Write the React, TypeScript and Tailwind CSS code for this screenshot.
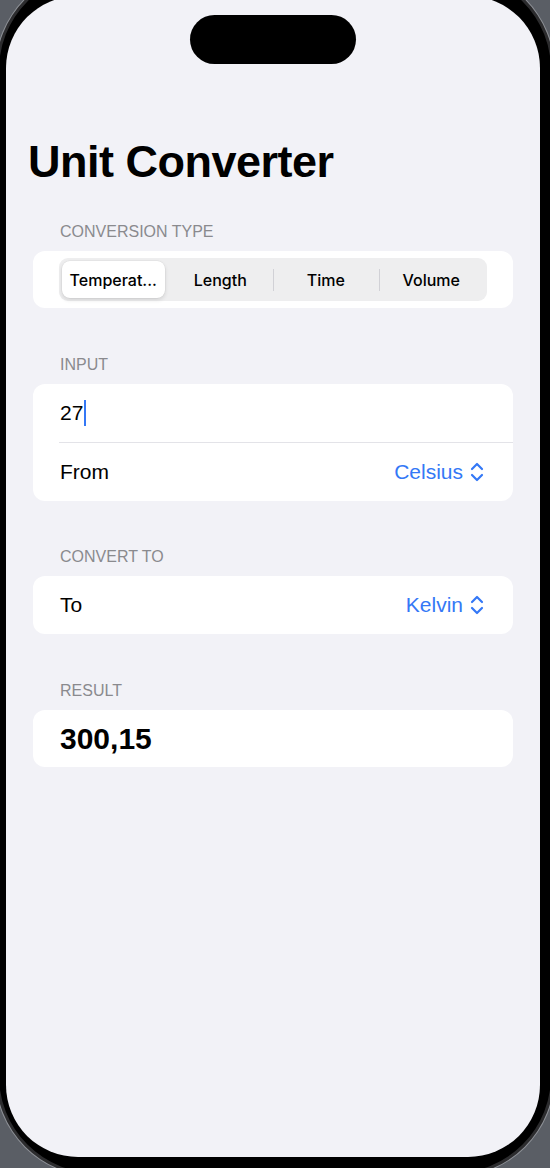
import { ChevronsUpDown } from 'lucide-react';

const segments = ['Temperat...', 'Length', 'Time', 'Volume'];

function SectionLabel({ children }: { children: string }) {
  return (
    <div className="pl-[27px] mb-[9px] text-[16px] leading-[20px] text-[#8a8a8e] uppercase">
      {children}
    </div>
  );
}

function PickerRow({ label, value }: { label: string; value: string }) {
  return (
    <div className="h-[58px] pl-[27px] pr-[24px] flex items-center justify-between">
      <span className="text-[21px] text-black">{label}</span>
      <span className="flex items-center text-[21px] text-[#3478f6]">
        {value}
        <ChevronsUpDown size={24} strokeWidth={2.2} className="ml-[2px]" />
      </span>
    </div>
  );
}

export default function App() {
  return (
    <div className="w-[550px] h-[1168px] overflow-hidden bg-[#5a5e65] font-['Liberation_Sans',Arial,sans-serif]">
      <div className="-mx-[4px] -mt-[30px] h-[1206px] rounded-[100px] bg-black border-[3px] border-[#2c2c2e] pl-[7px] pr-[11px] pt-[23px] pb-[16px] shadow-[0_0_0_1px_#8d9096]">
        <div className="h-full rounded-[72px] bg-[#f2f2f7] flex flex-col overflow-hidden">
          {/* dynamic island */}
          <div className="mt-[19px] self-center w-[166px] h-[49px] rounded-full bg-black" />

          <h1 className="mt-[72px] ml-[22px] text-[45px] leading-[52px] font-bold tracking-[-0.5px] text-black">
            Unit Converter
          </h1>

          <div className="mt-[34px] mx-[27px] flex flex-col gap-[46.5px]">
            <section>
              <SectionLabel>Conversion Type</SectionLabel>
              <div className="bg-white rounded-[12px] px-[26px] py-[7px]">
                <div className="h-[43px] rounded-[9px] bg-[#eeeeef] p-[3px] grid grid-cols-4">
                  {segments.map((s, i) => (
                    <div key={s} className="relative flex items-stretch">
                      {i > 1 && (
                        <div className="absolute left-0 top-1/2 -translate-y-1/2 w-px h-[22px] bg-[#d1d1d6]" />
                      )}
                      <div
                        className={`flex-1 flex items-center justify-center rounded-[8px] font-['Inter',sans-serif] text-[16px] font-medium text-black ${
                          i === 0 ? 'mr-[3px] bg-white shadow-[0_2px_4px_rgba(0,0,0,0.12),0_0_0_0.5px_rgba(0,0,0,0.06)]' : ''
                        }`}
                      >
                        {s}
                      </div>
                    </div>
                  ))}
                </div>
              </div>
            </section>

            <section>
              <SectionLabel>Input</SectionLabel>
              <div className="bg-white rounded-[12px]">
                <div className="h-[58px] pl-[27px] flex items-center">
                  <span className="text-[21px] text-black">27</span>
                  <span className="ml-[1px] w-[2px] h-[26px] bg-[#3478f6]" />
                </div>
                <div className="ml-[26px] h-px bg-[#e3e3e8]" />
                <PickerRow label="From" value="Celsius" />
              </div>
            </section>

            <section>
              <SectionLabel>Convert To</SectionLabel>
              <div className="bg-white rounded-[12px]">
                <PickerRow label="To" value="Kelvin" />
              </div>
            </section>

            <section>
              <SectionLabel>Result</SectionLabel>
              <div className="bg-white rounded-[12px] h-[57px] pl-[27px] flex items-center">
                <span className="text-[30px] font-bold text-black">300,15</span>
              </div>
            </section>
          </div>
        </div>
      </div>
    </div>
  );
}
